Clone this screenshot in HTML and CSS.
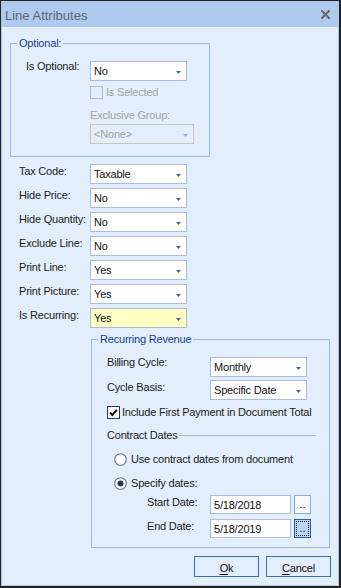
FILE: index.html
```html
<!DOCTYPE html>
<html>
<head>
<meta charset="utf-8">
<link rel="stylesheet" href="styles.css">
</head>
<body>
<div class="window">
  <div class="titlebar">
    <span class="title">Line Attributes</span>
    <svg class="close" width="9" height="9" viewBox="0 0 9 9"><path d="M1 1 L8 8 M8 1 L1 8" stroke="#6b6b6b" stroke-width="2.2" stroke-linecap="square" fill="none"/></svg>
  </div>
  <div class="content">
    <fieldset class="group optional">
      <legend>Optional:</legend>
      <div class="opt-body">
        <div class="row">
          <span class="lbl lbl-opt tight">Is Optional:</span>
          <div class="sel">No<svg class="arrow" width="5" height="3" viewBox="0 0 5 3"><path d="M0 0 H5 L2.5 3 Z" fill="#3f67a8"/></svg></div>
        </div>
        <div class="opt-sub">
          <div class="chk disabled"><span class="box"></span><span>Is Selected</span></div>
          <div class="sublabel disabled">Exclusive Group:</div>
          <div class="sel sel-dis">&lt;None&gt;<svg class="arrow" width="5" height="3" viewBox="0 0 5 3"><path d="M0 0 H5 L2.5 3 Z" fill="#b3a5c6"/></svg></div>
        </div>
      </div>
    </fieldset>

    <div class="fields">
      <div class="row"><span class="lbl lbl-main">Tax Code:</span><div class="sel">Taxable<svg class="arrow" width="5" height="3" viewBox="0 0 5 3"><path d="M0 0 H5 L2.5 3 Z" fill="#3f67a8"/></svg></div></div>
      <div class="row"><span class="lbl lbl-main">Hide Price:</span><div class="sel">No<svg class="arrow" width="5" height="3" viewBox="0 0 5 3"><path d="M0 0 H5 L2.5 3 Z" fill="#3f67a8"/></svg></div></div>
      <div class="row"><span class="lbl lbl-main">Hide Quantity:</span><div class="sel">No<svg class="arrow" width="5" height="3" viewBox="0 0 5 3"><path d="M0 0 H5 L2.5 3 Z" fill="#3f67a8"/></svg></div></div>
      <div class="row"><span class="lbl lbl-main">Exclude Line:</span><div class="sel">No<svg class="arrow" width="5" height="3" viewBox="0 0 5 3"><path d="M0 0 H5 L2.5 3 Z" fill="#3f67a8"/></svg></div></div>
      <div class="row"><span class="lbl lbl-main">Print Line:</span><div class="sel">Yes<svg class="arrow" width="5" height="3" viewBox="0 0 5 3"><path d="M0 0 H5 L2.5 3 Z" fill="#3f67a8"/></svg></div></div>
      <div class="row"><span class="lbl lbl-main">Print Picture:</span><div class="sel">Yes<svg class="arrow" width="5" height="3" viewBox="0 0 5 3"><path d="M0 0 H5 L2.5 3 Z" fill="#3f67a8"/></svg></div></div>
      <div class="row"><span class="lbl lbl-main">Is Recurring:</span><div class="sel sel-hl">Yes<svg class="arrow" width="5" height="3" viewBox="0 0 5 3"><path d="M0 0 H5 L2.5 3 Z" fill="#3f67a8"/></svg></div></div>
    </div>

    <fieldset class="group recurring">
      <legend>Recurring Revenue</legend>
      <div class="rec-body">
        <div class="row"><span class="lbl lbl-rec tight">Billing Cycle:</span><div class="sel">Monthly<svg class="arrow" width="5" height="3" viewBox="0 0 5 3"><path d="M0 0 H5 L2.5 3 Z" fill="#3f67a8"/></svg></div></div>
        <div class="row row-basis"><span class="lbl lbl-rec">Cycle Basis:</span><div class="sel">Specific Date<svg class="arrow" width="5" height="3" viewBox="0 0 5 3"><path d="M0 0 H5 L2.5 3 Z" fill="#3f67a8"/></svg></div></div>
        <div class="chk chk-pay"><span class="box box-on"><svg width="11" height="11" viewBox="0 0 11 11"><polyline points="2,5.5 4.3,8 9,2.8" fill="none" stroke="#111" stroke-width="1.9"/></svg></span><span>Include First Payment in Document Total</span></div>
        <div class="cd"><span>Contract Dates</span><span class="line"></span></div>
        <div class="radio radio-first"><svg width="13" height="13" viewBox="0 0 13 13"><circle cx="6.5" cy="6.5" r="5.8" fill="#fff" stroke="#5f7391" stroke-width="1.1"/></svg><span>Use contract dates from document</span></div>
        <div class="radio"><svg width="13" height="13" viewBox="0 0 13 13"><circle cx="6.5" cy="6.5" r="5.8" fill="#fff" stroke="#5f7391" stroke-width="1.1"/><circle cx="6.5" cy="6.5" r="3" fill="#27344c"/></svg><span>Specify dates:</span></div>
        <div class="date-row date-first"><span class="dlbl">Start Date:</span><div class="dinput">5/18/2018</div><div class="dbtn">..</div></div>
        <div class="date-row"><span class="dlbl">End Date:</span><div class="dinput">5/18/2019</div><div class="dbtn dbtn-focus">..</div></div>
      </div>
    </fieldset>

    <div class="buttons">
      <div class="btn"><u>O</u>k</div>
      <div class="btn"><u>C</u>ancel</div>
    </div>
  </div>
</div>
</body>
</html>
```

FILE: styles.css
```css
* { box-sizing: border-box; }
html, body { margin: 0; padding: 0; }
body {
  font-family: "Liberation Sans", Arial, sans-serif;
  font-size: 11px;
  letter-spacing: -0.2px;
  color: #1c1c1c;
}
.window {
  width: 341px;
  height: 588px;
  border: 1px solid #222;
  border-right-width: 2px;
  border-bottom-width: 2px;
  background: #aecbef;
  display: flex;
  flex-direction: column;
}
.titlebar {
  height: 26px;
  flex: none;
  display: flex;
  align-items: flex-start;
  justify-content: space-between;
  padding: 3px 9px 0 4px;
}
.title {
  font-size: 13px;
  line-height: 23px;
  letter-spacing: 0;
  color: #5e6673;
}
.close { margin-top: 6px; }
.content {
  flex: 1;
  margin: 0 1px 1px 1px;
  background: #e3eefd;
  display: flex;
  flex-direction: column;
}
fieldset {
  margin: 0;
  padding: 0;
  border: 1px solid #9cb9df;
  min-width: 0;
}
legend {
  padding: 0 2px;
  line-height: 14px;
  color: #15428b;
}
.optional { margin: 9px 0 0 8px; width: 200px; }
.optional legend { margin-left: 6px; }
.opt-body { padding: 11px 0 12px 15px; }
.opt-sub { padding-left: 64px; }

.row { display: flex; height: 20px; align-items: flex-start; }
.lbl { flex: none; line-height: 14px; }
.lbl.tight { line-height: 10px; }
.lbl-opt { width: 64px; }
.lbl-main { width: 71px; }
.lbl-rec { width: 103px; }

.sel {
  width: 97px;
  height: 20px;
  flex: none;
  border: 1px solid #a7bedd;
  background: #fff;
  display: flex;
  justify-content: space-between;
  align-items: flex-start;
  padding: 1px 5px 0 3px;
  line-height: 17px;
  color: #111;
}
.sel .arrow { margin-top: 8px; flex: none; }
.sel-dis { width: 104px; border-color: #c9c6be; background: transparent; color: #a3a3a3; margin-top: 2px; }
.sel-hl { background: #ffffc2; }

.chk { display: flex; align-items: center; gap: 3px; height: 13px; line-height: 13px; }
.opt-sub .chk { margin-top: 5px; }
.box {
  width: 13px;
  height: 13px;
  flex: none;
  border: 1px solid #1f3d6b;
  background: #fff;
  display: flex;
}
.disabled { color: #a3a3a3; }
.disabled .box { border-color: #b9b9b9; background: transparent; }
.sublabel { margin-top: 9px; line-height: 14px; }

.fields {
  margin: 7px 0 0 17px;
  display: flex;
  flex-direction: column;
  gap: 4px;
}

.recurring { margin: 4px 0 0 89px; width: 239px; }
.recurring legend { margin-left: 6px; }
.rec-body { padding: 11px 0 9px 15px; }
.row-basis { margin-top: 3px; }
.chk-pay { margin-top: 6px; gap: 2px; }
.cd {
  display: flex;
  align-items: center;
  margin: 9px 13px 0 0;
  line-height: 14px;
}
.cd .line { flex: 1; height: 1px; background: #9cb9df; margin-left: 1px; }
.radio {
  display: flex;
  align-items: center;
  gap: 4px;
  height: 13px;
  line-height: 13px;
  margin: 11px 0 0 7px;
}
.radio svg { flex: none; }
.date-row { display: flex; align-items: flex-start; margin: 5px 0 0 40px; }
.dlbl { width: 63px; flex: none; line-height: 14px; }
.dinput {
  width: 81px;
  height: 19px;
  border: 1px solid #a7bedd;
  background: #fff;
  padding: 0 0 0 3px;
  line-height: 18px;
  color: #111;
}
.dbtn {
  width: 17px;
  height: 19px;
  margin-left: 3px;
  border: 1px solid #8eaad0;
  background: #f5f9ff;
  text-align: center;
  line-height: 16px;
  letter-spacing: 0;
  color: #111;
}
.dbtn-focus {
  background: #b8d5f8;
  border-color: #2d5b93;
  outline: 1px dotted #222;
  outline-offset: -3px;
}

.buttons {
  display: flex;
  justify-content: flex-end;
  gap: 7px;
  margin: 8px 7px 0 0;
}
.btn {
  width: 65px;
  height: 21px;
  border: 1px solid #3e6ea8;
  background: #e3eefd;
  text-align: center;
  line-height: 20px;
  padding-top: 1px;
  color: #111;
}
.btn u { text-decoration-thickness: 1px; text-underline-offset: 2px; }
```
